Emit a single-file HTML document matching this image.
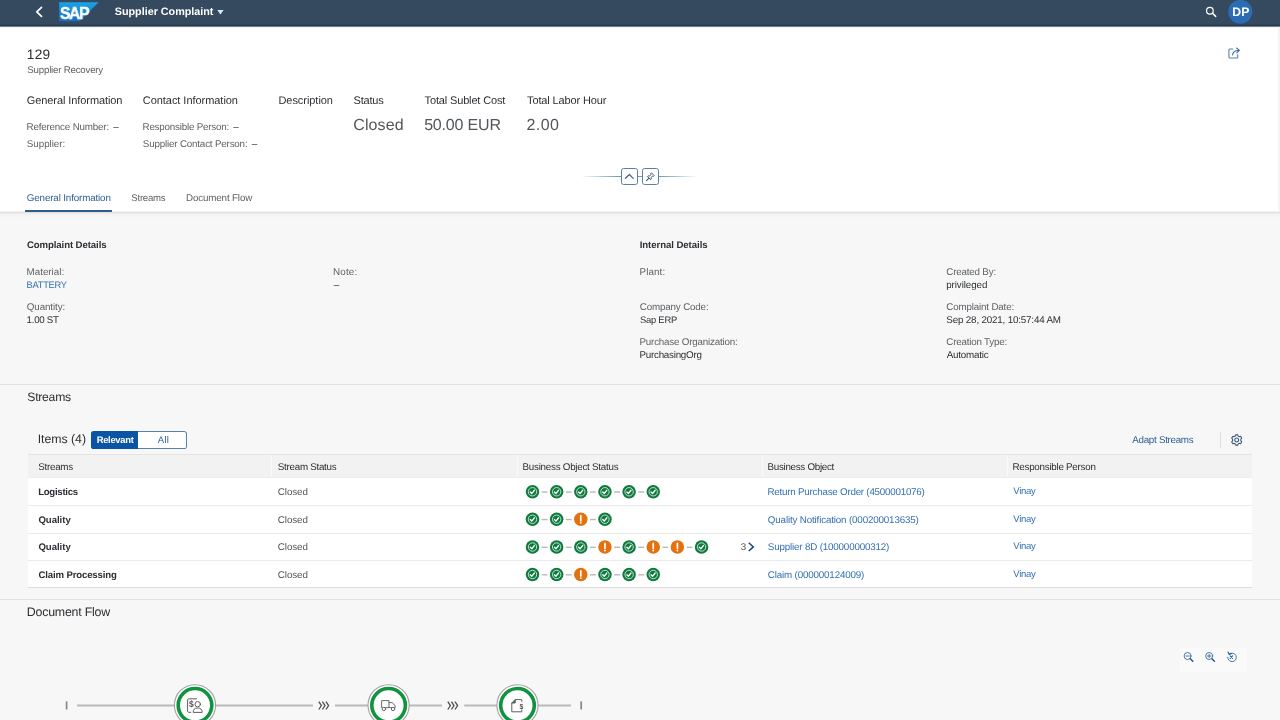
<!DOCTYPE html>
<html lang="en">
<head>
<meta charset="utf-8">
<title>Supplier Complaint</title>
<style>
*{box-sizing:border-box;margin:0;padding:0}
html,body{width:1280px;height:720px;overflow:hidden;background:#f7f7f7}
body{position:relative;font-family:"Liberation Sans",sans-serif;}
.a{position:absolute}
.t{position:absolute;white-space:nowrap;line-height:20px;font-family:"Liberation Sans",sans-serif;}
#shell{left:0;top:0;width:1280px;height:26px;background:#354a5f}
#shellsh{left:0;top:24px;width:1280px;height:4px;background:linear-gradient(#2f4459 0,#2f4459 25%,#24394c 25%,#24394c 50%,#76838f 50%,#76838f 75%,#f0f1f3 75%,#f0f1f3 100%)}
#hdr{left:0;top:26px;width:1280px;height:186px;background:#fff}
#hdrline{left:0;top:211px;width:1280px;height:6px;background:linear-gradient(#f1f1f1 0.000%,#f1f1f1 16.667%,#e1e1e1 16.667%,#e1e1e1 33.333%,#ebebeb 33.333%,#ebebeb 50.000%,#f3f3f3 50.000%,#f3f3f3 66.667%,#f4f4f4 66.667%,#f4f4f4 83.333%,#f5f5f5 83.333%,#f5f5f5 100.000%)}
.sep{left:0;width:1280px;height:1px;background:#e2e2e2}
#tabul{left:25px;top:209.9px;width:86.8px;height:2px;background:#2d5d8c;border-radius:0.5px}
.hbtn{width:16.8px;height:16.8px;border:1.1px solid #5a7fa3;border-radius:2.6px;background:#fff}
#seg{left:91.4px;top:431.1px;width:95.4px;height:17.6px;border-radius:2.6px;background:#fff;overflow:hidden}
#segsel{left:0;top:0;width:47px;height:17.6px;background:#0a55a3}
#segall{left:47px;top:0;width:48.4px;height:17.6px;border:1.1px solid #5880aa;border-left:none;border-radius:0 2.6px 2.6px 0;background:#fff}
#tbl{left:28px;top:454px;width:1224px;height:134px;background:#fff;border-top:1px solid #e5e5e5;border-bottom:1px solid #dcdcdc}
#thead{left:28px;top:455px;width:1224px;height:22.6px;background:#f2f2f2;border-bottom:1px solid #ececec}
.cdiv{top:455px;width:1px;height:22px;background:#fafafa}
.rsep{left:28px;width:1224px;height:1px;background:#ebebeb}
svg{position:absolute;overflow:visible}
#txt{position:absolute;left:0;top:0;width:1280px;height:720px;will-change:transform}
</style>
</head>
<body>
<div class="a" id="shell"></div>
<div class="a" id="hdr"></div>
<div class="a" id="shellsh"></div>
<div class="a" id="hdrline"></div>
<div class="a sep" style="top:384px"></div>
<div class="a sep" style="top:599px"></div>
<div class="a" id="tabul"></div>

<div class="a" style="left:1277.5px;top:27px;width:2.5px;height:184px;background:#f4f4f4"></div>
<div class="a" style="left:1180px;top:648px;width:67px;height:24px;background:#fafafa"></div>
<!-- shell icons -->
<svg style="left:0;top:0" width="1280" height="26" viewBox="0 0 1280 26">
  <defs><linearGradient id="sapg" x1="0" y1="0" x2="0" y2="1"><stop offset="0" stop-color="#1ba3ea"/><stop offset="1" stop-color="#166dc2"/></linearGradient></defs>
  <path d="M41.5 7.3 L36.8 11.8 L41.5 16.3" fill="none" stroke="#fff" stroke-width="1.7" stroke-linecap="round" stroke-linejoin="round"/>
  <path d="M59.2 2.2 H98.6 L79.6 21.3 H59.2 Z" fill="url(#sapg)"/>
  <path d="M217.3 9.9 H223.6 L220.45 14.4 Z" fill="#d1e8ff"/>
  <circle cx="1209.9" cy="10.7" r="3.35" fill="none" stroke="#fff" stroke-width="1.2"/>
  <path d="M1212.5 13.3 L1215.7 16.4" stroke="#fff" stroke-width="1.5" stroke-linecap="round"/>
  <circle cx="1240.3" cy="11.8" r="12" fill="#2b6db5"/>
</svg>
<span class="t" style="left:59.6px;top:3px;font-size:17.4px;font-weight:bold;color:#fff;letter-spacing:-1.5px;transform:scaleX(0.9);transform-origin:0 0;-webkit-text-stroke:0.45px #fff;will-change:transform">SAP</span>

<!-- share icon -->
<svg style="left:1228px;top:47px" width="13" height="12" viewBox="0 0 13 12">
  <path d="M4.8 2 H2 Q0.9 2 0.9 3.1 V10 Q0.9 11 2 11 H8.6 Q9.7 11 9.7 10 V7.6" fill="none" stroke="#5b7fa6" stroke-width="1.1" stroke-linecap="round"/>
  <path d="M4.5 8 Q5 3.6 10.6 3.4" fill="none" stroke="#3f6f9f" stroke-width="1.1" stroke-linecap="round"/>
  <path d="M8.6 1 L11.4 3.4 L8.8 5.8" fill="none" stroke="#3f6f9f" stroke-width="1.1" stroke-linecap="round" stroke-linejoin="round"/>
</svg>

<!-- header collapse / pin -->
<div class="a" style="left:581px;top:175.8px;width:117px;height:1.7px;background:linear-gradient(90deg,rgba(115,151,187,0),#7397bb 32%,#7397bb 68%,rgba(115,151,187,0))"></div>
<div class="a hbtn" style="left:621px;top:168.1px"></div>
<div class="a hbtn" style="left:642.1px;top:168.1px"></div>
<svg style="left:621px;top:168.1px" width="17" height="17" viewBox="0 0 17 17">
  <path d="M4.4 10.3 L8.4 6.5 L12.2 10.3" fill="none" stroke="#45608a" stroke-width="1.2" stroke-linecap="round" stroke-linejoin="round"/>
</svg>
<svg style="left:642.1px;top:168.1px" width="17" height="17" viewBox="0 0 17 17">
  <g transform="translate(8.9 8.3) scale(0.86) translate(-8.9 -8.3)">
  <path d="M9.4 4.2 L12.8 7.6 L11.9 8.3 L10.8 8 L9.2 9.8 L9.3 11.6 L8.5 12.2 L4.9 8.6 L5.6 7.8 L7.3 7.9 L9 6.3 L8.7 5.1 Z" fill="none" stroke="#3b5878" stroke-width="1.15" stroke-linejoin="round"/>
  <path d="M6.6 10.5 L3.8 13.3" stroke="#3b5878" stroke-width="1.25" stroke-linecap="round"/>
  </g>
</svg>

<!-- segmented button -->
<div class="a" id="seg"><div class="a" id="segsel"></div><div class="a" id="segall"></div></div>

<!-- toolbar right -->
<div class="a" style="left:1220px;top:432.4px;width:1px;height:15.4px;background:#dedede"></div>
<svg style="left:1230px;top:433px" width="14" height="14" viewBox="-7 -7 14 14">
  <g fill="none" stroke="#3d5c7c" stroke-width="1.2" transform="translate(-0.3 0) scale(0.92)">
    <circle r="2.1" cx="0" cy="0"/>
    <path d="M-1.1 -5.6 H1.1 L1.6 -4.3 L2.9 -3.6 L4.2 -4 L5.4 -2.1 L4.5 -1 V1 L5.4 2.1 L4.2 4 L2.9 3.6 L1.6 4.3 L1.1 5.6 H-1.1 L-1.6 4.3 L-2.9 3.6 L-4.2 4 L-5.4 2.1 L-4.5 1 V-1 L-5.4 -2.1 L-4.2 -4 L-2.9 -3.6 L-1.6 -4.3 Z" stroke-linejoin="round"/>
  </g>
</svg>

<!-- table -->
<div class="a" id="tbl"></div>
<div class="a" id="thead"></div>
<div class="a cdiv" style="left:270.5px"></div>
<div class="a cdiv" style="left:517.3px"></div>
<div class="a cdiv" style="left:762px"></div>
<div class="a cdiv" style="left:1007px"></div>
<div class="a rsep" style="top:505px"></div>
<div class="a rsep" style="top:532.6px"></div>
<div class="a rsep" style="top:560.2px"></div>

<!-- status icons -->
<svg style="left:0;top:0" width="1280" height="720" viewBox="0 0 1280 720">
  <defs>
    <g id="ok">
      <circle r="6.75" fill="#0f7a3d"/>
      <circle r="4.2" fill="none" stroke="#d9f2e2" stroke-width="0.85"/>
      <path d="M-2.2 0.2 L-0.7 1.8 L1.9 -1.5" fill="none" stroke="#fff" stroke-width="1.3" stroke-linecap="round" stroke-linejoin="round"/>
    </g>
    <g id="wn">
      <circle r="6.75" fill="#e4710f"/>
      <path d="M0 -3.6 V1.6" stroke="#fff" stroke-width="1.7" stroke-linecap="round"/>
      <circle cy="3.6" r="0.95" fill="#fff"/>
    </g>
    <path id="ds" d="M9.2 0.3 H15" stroke="#b9b9b9" stroke-width="1.4"/>
    <g id="chev" fill="none" stroke="#505050" stroke-width="1.3" stroke-linejoin="miter">
      <path d="M0 -3.9 L2.6 0 L0 3.9"/><path d="M3.6 -3.9 L6.2 0 L3.6 3.9"/><path d="M7.2 -3.9 L9.8 0 L7.2 3.9"/>
    </g>
    <g id="node">
      <circle r="20.6" fill="#fff" stroke="#9e9e9e" stroke-width="1.05"/>
      <circle r="16.8" fill="#fff" stroke="#10933f" stroke-width="3.6"/>
    </g>
  </defs>
  <use href="#ds" x="532.50" y="491.75"/>
<use href="#ok" x="532.50" y="491.75"/>
<use href="#ds" x="556.65" y="491.75"/>
<use href="#ok" x="556.65" y="491.75"/>
<use href="#ds" x="580.80" y="491.75"/>
<use href="#ok" x="580.80" y="491.75"/>
<use href="#ds" x="604.95" y="491.75"/>
<use href="#ok" x="604.95" y="491.75"/>
<use href="#ds" x="629.10" y="491.75"/>
<use href="#ok" x="629.10" y="491.75"/>
<use href="#ok" x="653.25" y="491.75"/>
<use href="#ds" x="532.50" y="519.25"/>
<use href="#ok" x="532.50" y="519.25"/>
<use href="#ds" x="556.65" y="519.25"/>
<use href="#ok" x="556.65" y="519.25"/>
<use href="#ds" x="580.80" y="519.25"/>
<use href="#wn" x="580.80" y="519.25"/>
<use href="#ok" x="604.95" y="519.25"/>
<use href="#ds" x="532.50" y="547.00"/>
<use href="#ok" x="532.50" y="547.00"/>
<use href="#ds" x="556.65" y="547.00"/>
<use href="#ok" x="556.65" y="547.00"/>
<use href="#ds" x="580.80" y="547.00"/>
<use href="#ok" x="580.80" y="547.00"/>
<use href="#ds" x="604.95" y="547.00"/>
<use href="#wn" x="604.95" y="547.00"/>
<use href="#ds" x="629.10" y="547.00"/>
<use href="#ok" x="629.10" y="547.00"/>
<use href="#ds" x="653.25" y="547.00"/>
<use href="#wn" x="653.25" y="547.00"/>
<use href="#ds" x="677.40" y="547.00"/>
<use href="#wn" x="677.40" y="547.00"/>
<use href="#ok" x="701.55" y="547.00"/>
<use href="#ds" x="532.50" y="574.50"/>
<use href="#ok" x="532.50" y="574.50"/>
<use href="#ds" x="556.65" y="574.50"/>
<use href="#ok" x="556.65" y="574.50"/>
<use href="#ds" x="580.80" y="574.50"/>
<use href="#wn" x="580.80" y="574.50"/>
<use href="#ds" x="604.95" y="574.50"/>
<use href="#ok" x="604.95" y="574.50"/>
<use href="#ds" x="629.10" y="574.50"/>
<use href="#ok" x="629.10" y="574.50"/>
<use href="#ok" x="653.25" y="574.50"/>
  <!-- row 3 more indicator chevron -->
  <path d="M748.8 542.8 L753.3 546.9 L748.8 551" fill="none" stroke="#1a4a85" stroke-width="1.55" stroke-linecap="butt" stroke-linejoin="miter"/>

  <!-- document flow -->
  <g stroke="#bababa" stroke-width="1.8">
    <path d="M77 705.5 H175"/><path d="M215 705.5 H313"/><path d="M335 705.5 H368"/><path d="M409 705.5 H442"/><path d="M464.2 705.5 H497"/><path d="M538 705.5 H571"/>
  </g>
  <path d="M66.6 701.4 V709.5" stroke="#868686" stroke-width="1.7"/>
  <path d="M581.2 701.4 V709.5" stroke="#868686" stroke-width="1.7"/>
  <use href="#chev" x="318.8" y="705.6"/>
  <use href="#chev" x="447.8" y="705.6"/>
  <use href="#node" x="195" y="705.3"/>
  <use href="#node" x="388.6" y="705.3"/>
  <use href="#node" x="517.5" y="705.3"/>
  <!-- node 1 icon: doc + $ + person -->
  <g fill="none" stroke="#5f5f5f" stroke-width="1" stroke-linecap="round" stroke-linejoin="round">
    <path d="M196.5 698.8 H188.6 Q187.6 698.8 187.6 699.8 V711.4 Q187.6 712.3 188.6 712.3 H190.8"/>
    <circle cx="197.7" cy="704.2" r="2.7"/>
    <path d="M193.2 712 Q193.2 708 197.7 708 Q202.2 708 202.2 712 Z"/>
  </g>
  <text x="188.9" y="706.7" font-family="Liberation Sans, sans-serif" font-size="8.6" font-weight="bold" fill="#555">$</text>
  <!-- node 2 icon: truck -->
  <g fill="none" stroke="#6a6a6a" stroke-width="1" stroke-linecap="round" stroke-linejoin="round">
    <path d="M382.2 707.6 H381.6 V700.6 H389 V707.6 H385.6"/>
    <path d="M389 702.6 H392.4 L395.2 706 V707.6 H394.6"/>
    <path d="M389 707.6 H391.6"/>
    <circle cx="383.9" cy="709" r="1.7"/>
    <circle cx="393" cy="709" r="1.7"/>
  </g>
  <!-- node 3 icon: doc with $ -->
  <g fill="none" stroke="#5f5f5f" stroke-width="1" stroke-linecap="round" stroke-linejoin="round">
    <path d="M521.8 701.4 V699.6 H515.2 L511.8 703 V711.8 H521.8 V710"/>
    <path d="M515.2 699.6 V703 H511.8" fill="#5f5f5f"/>
  </g>
  <text x="519.4" y="708.6" font-family="Liberation Sans, sans-serif" font-size="7" font-weight="bold" fill="#555">$</text>

  <!-- zoom icons -->
  <g fill="none" stroke="#4a78a8" stroke-width="1" stroke-linecap="round">
    <circle cx="1187.6" cy="656" r="3.5"/><path d="M1185.9 656 H1189.3"/>
    <path d="M1190.3 658.7 L1192.8 661.2" stroke="#1d5a96" stroke-width="1.5"/>
    <circle cx="1209.2" cy="656" r="3.5"/><path d="M1207.5 656 H1210.9 M1209.2 654.3 V657.7"/>
    <path d="M1211.9 658.7 L1214.4 661.2" stroke="#1d5a96" stroke-width="1.5"/>
    <path d="M1227.7 657.3 A4.3 4.3 0 1 0 1229.3 654" />
    <path d="M1230.1 655.8 L1232.6 658.4 M1232.6 655.8 L1230.1 658.4" stroke="#1d5a96" stroke-width="1.1"/>
    <path d="M1228 652 L1229.2 654.4 L1231.6 653.6" stroke="#1d5a96" stroke-width="1.1" stroke-linejoin="round"/>
  </g>
</svg>

<svg id="txt" width="1280" height="720" viewBox="0 0 1280 720" font-family="Liberation Sans, sans-serif" text-rendering="geometricPrecision">
<text x="114.78" y="15" font-size="10.8" fill="#ffffff" letter-spacing="-0.018" font-weight="bold">Supplier Complaint</text>
<text x="1232.31" y="16" font-size="12.2" fill="#ffffff" letter-spacing="0.262" font-weight="bold">DP</text>
<text x="26.77" y="59" font-size="13.7" fill="#2c2f33" letter-spacing="0.267">129</text>
<text x="27.36" y="73" font-size="9.7" fill="#5f6265" letter-spacing="-0.207">Supplier Recovery</text>
<text x="26.75" y="104" font-size="11" fill="#2c2f33" letter-spacing="-0.082">General Information</text>
<text x="142.75" y="104" font-size="11" fill="#2c2f33" letter-spacing="-0.043">Contact Information</text>
<text x="278.42" y="104" font-size="11" fill="#2c2f33" letter-spacing="-0.046">Description</text>
<text x="353.50" y="104" font-size="11" fill="#2c2f33" letter-spacing="-0.201">Status</text>
<text x="424.58" y="104" font-size="11" fill="#2c2f33" letter-spacing="-0.149">Total Sublet Cost</text>
<text x="527.08" y="104" font-size="11" fill="#2c2f33" letter-spacing="-0.131">Total Labor Hour</text>
<text x="26.52" y="130" font-size="9.8" fill="#5f6265" letter-spacing="-0.181">Reference Number:</text>
<text x="113.30" y="130" font-size="9.8" fill="#2c2f33">–</text>
<text x="26.86" y="147" font-size="9.8" fill="#5f6265" letter-spacing="-0.048">Supplier:</text>
<text x="142.52" y="130" font-size="9.8" fill="#5f6265" letter-spacing="-0.210">Responsible Person:</text>
<text x="233.30" y="130" font-size="9.8" fill="#2c2f33">–</text>
<text x="142.86" y="147" font-size="9.8" fill="#5f6265" letter-spacing="-0.181">Supplier Contact Person:</text>
<text x="251.80" y="147" font-size="9.8" fill="#2c2f33">–</text>
<text x="353.20" y="130" font-size="16" fill="#53575b" letter-spacing="0.140">Closed</text>
<text x="424.16" y="130" font-size="16" fill="#53575b" letter-spacing="-0.182">50.00 EUR</text>
<text x="526.50" y="130" font-size="16" fill="#53575b" letter-spacing="0.413">2.00</text>
<text x="26.81" y="201" font-size="9.8" fill="#2f5f92" letter-spacing="-0.139">General Information</text>
<text x="131.37" y="201" font-size="9.6" fill="#5f6265" letter-spacing="-0.249">Streams</text>
<text x="186.02" y="201" font-size="9.8" fill="#5f6265" letter-spacing="-0.152">Document Flow</text>
<text x="26.92" y="248" font-size="9.6" fill="#2c2f33" letter-spacing="-0.085" font-weight="bold">Complaint Details</text>
<text x="26.52" y="275" font-size="9.8" fill="#5f6265" letter-spacing="0.010">Material:</text>
<text x="26.56" y="288" font-size="9.3" fill="#346fb3" letter-spacing="-0.268">BATTERY</text>
<text x="26.86" y="310" font-size="9.8" fill="#5f6265" letter-spacing="-0.116">Quantity:</text>
<text x="26.57" y="323" font-size="9.7" fill="#2c2f33" letter-spacing="-0.255">1.00 ST</text>
<text x="333.02" y="275" font-size="9.8" fill="#5f6265" letter-spacing="0.186">Note:</text>
<text x="333.80" y="288" font-size="9.8" fill="#2c2f33">–</text>
<text x="639.68" y="248" font-size="9.6" fill="#2c2f33" letter-spacing="-0.058" font-weight="bold">Internal Details</text>
<text x="639.52" y="275" font-size="9.8" fill="#5f6265" letter-spacing="0.116">Plant:</text>
<text x="639.81" y="310" font-size="9.8" fill="#5f6265" letter-spacing="-0.165">Company Code:</text>
<text x="639.88" y="323" font-size="9.4" fill="#2c2f33" letter-spacing="-0.207">Sap ERP</text>
<text x="639.52" y="345" font-size="9.8" fill="#5f6265" letter-spacing="-0.204">Purchase Organization:</text>
<text x="639.52" y="358" font-size="9.8" fill="#2c2f33" letter-spacing="-0.250">PurchasingOrg</text>
<text x="946.31" y="275" font-size="9.8" fill="#5f6265" letter-spacing="-0.192">Created By:</text>
<text x="946.21" y="288" font-size="9.8" fill="#2c2f33" letter-spacing="-0.085">privileged</text>
<text x="946.31" y="310" font-size="9.8" fill="#5f6265" letter-spacing="-0.171">Complaint Date:</text>
<text x="946.36" y="323" font-size="9.8" fill="#2c2f33" letter-spacing="-0.171">Sep 28, 2021, 10:57:44 AM</text>
<text x="946.31" y="345" font-size="9.8" fill="#5f6265" letter-spacing="-0.210">Creation Type:</text>
<text x="946.80" y="358" font-size="9.8" fill="#2c2f33" letter-spacing="-0.227">Automatic</text>
<text x="27.25" y="401" font-size="12.2" fill="#2c2f33" letter-spacing="-0.245">Streams</text>
<text x="37.69" y="443" font-size="12.3" fill="#2c2f33" letter-spacing="-0.022">Items (4)</text>
<text x="96.69" y="443" font-size="9.4" fill="#ffffff" letter-spacing="-0.285" font-weight="bold">Relevant</text>
<text x="157.80" y="443" font-size="9.6" fill="#2c5f94" letter-spacing="0.210">All</text>
<text x="1132.30" y="443" font-size="9.8" fill="#2c5f94" letter-spacing="-0.290">Adapt Streams</text>
<text x="38.36" y="470" font-size="9.8" fill="#2c2f33" letter-spacing="-0.287">Streams</text>
<text x="277.86" y="470" font-size="9.8" fill="#2c2f33" letter-spacing="-0.275">Stream Status</text>
<text x="522.52" y="470" font-size="9.8" fill="#2c2f33" letter-spacing="-0.248">Business Object Status</text>
<text x="767.52" y="470" font-size="9.8" fill="#2c2f33" letter-spacing="-0.287">Business Object</text>
<text x="1012.52" y="470" font-size="9.8" fill="#2c2f33" letter-spacing="-0.255">Responsible Person</text>
<text x="38.18" y="495" font-size="9.6" fill="#2c2f33" letter-spacing="-0.273" font-weight="bold">Logistics</text>
<text x="277.81" y="495" font-size="9.8" fill="#515559" letter-spacing="-0.080">Closed</text>
<text x="767.52" y="495" font-size="9.8" fill="#346fb3" letter-spacing="-0.234">Return Purchase Order (4500001076)</text>
<text x="1013.30" y="494" font-size="9.5" fill="#346fb3" letter-spacing="-0.277">Vinay</text>
<text x="38.42" y="523" font-size="9.6" fill="#2c2f33" letter-spacing="-0.027" font-weight="bold">Quality</text>
<text x="277.81" y="523" font-size="9.8" fill="#515559" letter-spacing="-0.080">Closed</text>
<text x="767.86" y="523" font-size="9.8" fill="#346fb3" letter-spacing="-0.157">Quality Notification (000200013635)</text>
<text x="1013.30" y="522" font-size="9.5" fill="#346fb3" letter-spacing="-0.277">Vinay</text>
<text x="38.42" y="550" font-size="9.6" fill="#2c2f33" letter-spacing="-0.027" font-weight="bold">Quality</text>
<text x="277.81" y="550" font-size="9.8" fill="#515559" letter-spacing="-0.080">Closed</text>
<text x="767.86" y="550" font-size="9.8" fill="#346fb3" letter-spacing="-0.174">Supplier 8D (100000000312)</text>
<text x="1013.30" y="549" font-size="9.5" fill="#346fb3" letter-spacing="-0.277">Vinay</text>
<text x="38.42" y="578" font-size="9.6" fill="#2c2f33" letter-spacing="-0.136" font-weight="bold">Claim Processing</text>
<text x="277.81" y="578" font-size="9.8" fill="#515559" letter-spacing="-0.080">Closed</text>
<text x="767.81" y="578" font-size="9.8" fill="#346fb3" letter-spacing="-0.165">Claim (000000124009)</text>
<text x="1013.30" y="577" font-size="9.5" fill="#346fb3" letter-spacing="-0.277">Vinay</text>
<text x="740.76" y="550" font-size="9.8" fill="#4f5256">3</text>
<text x="26.81" y="616" font-size="12.4" fill="#2c2f33" letter-spacing="-0.224">Document Flow</text>
</svg>
</body>
</html>
